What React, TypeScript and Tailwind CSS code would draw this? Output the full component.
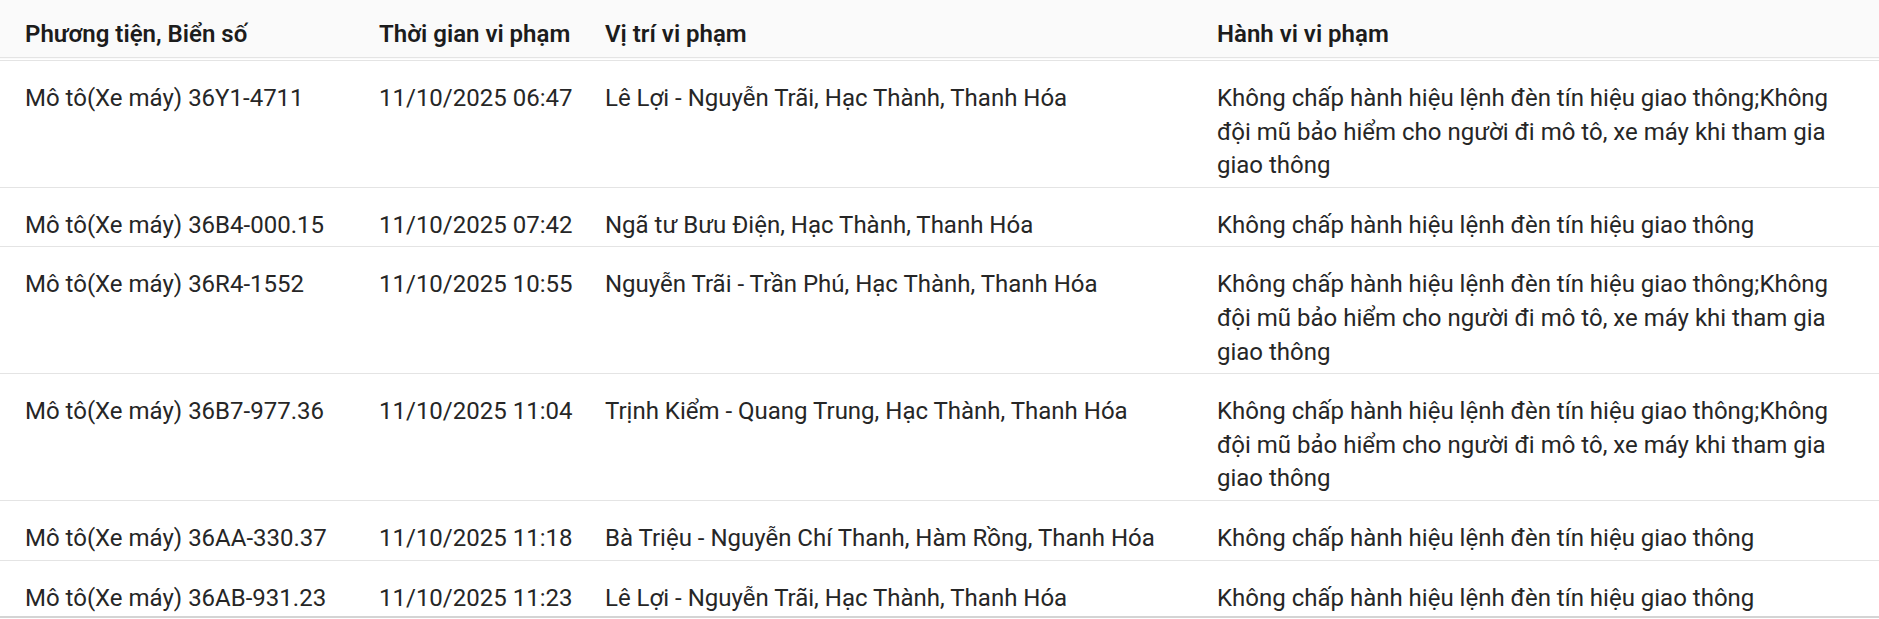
import React from 'react';

type Violation = {
  vehicle: string;
  time: string;
  place: string;
  behavior: string;
};

const RED_LIGHT = 'Không chấp hành hiệu lệnh đèn tín hiệu giao thông';
const RED_LIGHT_HELMET =
  'Không chấp hành hiệu lệnh đèn tín hiệu giao thông;Không đội mũ bảo hiểm cho người đi mô tô, xe máy khi tham gia giao thông';

const rows: Violation[] = [
  { vehicle: 'Mô tô(Xe máy) 36Y1-4711', time: '11/10/2025 06:47', place: 'Lê Lợi - Nguyễn Trãi, Hạc Thành, Thanh Hóa', behavior: RED_LIGHT_HELMET },
  { vehicle: 'Mô tô(Xe máy) 36B4-000.15', time: '11/10/2025 07:42', place: 'Ngã tư Bưu Điện, Hạc Thành, Thanh Hóa', behavior: RED_LIGHT },
  { vehicle: 'Mô tô(Xe máy) 36R4-1552', time: '11/10/2025 10:55', place: 'Nguyễn Trãi - Trần Phú, Hạc Thành, Thanh Hóa', behavior: RED_LIGHT_HELMET },
  { vehicle: 'Mô tô(Xe máy) 36B7-977.36', time: '11/10/2025 11:04', place: 'Trịnh Kiểm - Quang Trung, Hạc Thành, Thanh Hóa', behavior: RED_LIGHT_HELMET },
  { vehicle: 'Mô tô(Xe máy) 36AA-330.37', time: '11/10/2025 11:18', place: 'Bà Triệu - Nguyễn Chí Thanh, Hàm Rồng, Thanh Hóa', behavior: RED_LIGHT },
  { vehicle: 'Mô tô(Xe máy) 36AB-931.23', time: '11/10/2025 11:23', place: 'Lê Lợi - Nguyễn Trãi, Hạc Thành, Thanh Hóa', behavior: RED_LIGHT },
];

const App = () => {
  return (
    <div className="w-[1879px] bg-white font-['Roboto',sans-serif] text-[24px] leading-[33.6px]">
      <table className="w-full table-fixed border-collapse">
        <colgroup>
          <col className="w-[354px]" />
          <col className="w-[226px]" />
          <col className="w-[612px]" />
          <col />
        </colgroup>
        <thead>
          <tr className="h-[59px] border-b border-[#ececec] bg-[#fafafa] text-left align-top text-[#1c1c1c]">
            <th className="pl-[25px] pt-[18px] font-semibold">Phương tiện, Biển số</th>
            <th className="pl-[25px] pt-[18px] font-semibold">Thời gian vi phạm</th>
            <th className="pl-[25px] pt-[18px] font-semibold">Vị trí vi phạm</th>
            <th className="pl-[25px] pr-[36px] pt-[18px] font-semibold">Hành vi vi phạm</th>
          </tr>
        </thead>
        <tbody className="border-t-[4px] border-double border-[#e4e4e4] text-[#262626]">
          {rows.map((r, i) => {
            const last = i === rows.length - 1;
            const cell = last ? 'pl-[25px] pt-[21px] pb-[1px]' : 'pl-[25px] pt-[21px] pb-[4px]';
            return (
              <tr
                key={i}
                className={
                  last
                    ? 'border-b-2 border-[#d4d4d4] align-top'
                    : 'border-b border-[#e4e4e4] align-top'
                }
              >
                <td className={cell}>{r.vehicle}</td>
                <td className={cell}>{r.time}</td>
                <td className={cell}>{r.place}</td>
                <td className={cell + ' pr-[36px]'}>{r.behavior}</td>
              </tr>
            );
          })}
        </tbody>
      </table>
    </div>
  );
};

export default App;
